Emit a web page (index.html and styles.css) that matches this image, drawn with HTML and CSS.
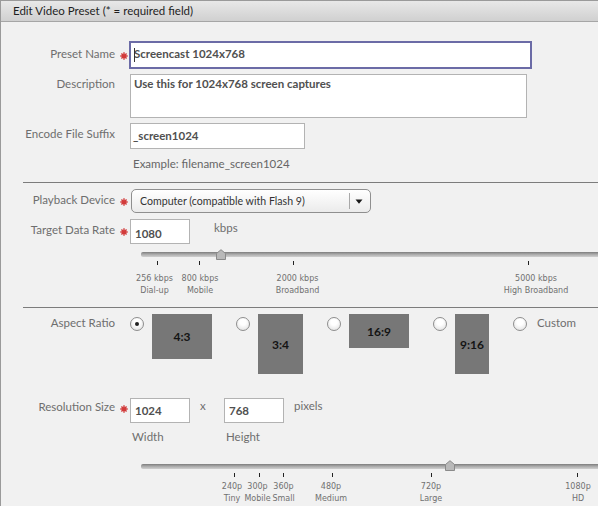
FILE: index.html
```html
<!DOCTYPE html>
<html>
<head>
<meta charset="utf-8">
<link rel="stylesheet" href="styles.css">
</head>
<body>
<div class="panel">
  <div class="titlebar">Edit Video Preset (* = required field)</div>
  <div class="content">
    <div class="row row-name">
      <div class="lbl">Preset Name</div>
      <div class="req"><svg class="star" width="8" height="8" viewBox="0 0 8 8"><path d="M4 0.3V7.7M0.3 4H7.7M1.4 1.4L6.6 6.6M6.6 1.4L1.4 6.6"/></svg></div>
      <div class="field field-name"><span class="caret"></span>Screencast 1024x768</div>
    </div>
    <div class="row row-desc">
      <div class="lbl">Description</div>
      <div class="req"></div>
      <div class="field field-desc">Use this for 1024x768 screen captures</div>
    </div>
    <div class="row row-suffix">
      <div class="lbl">Encode File Suffix</div>
      <div class="req"></div>
      <div class="field field-suffix">_screen1024</div>
    </div>
    <div class="hint">Example: filename_screen1024</div>
    <div class="divider"></div>

    <div class="row row-device">
      <div class="lbl">Playback Device</div>
      <div class="req"><svg class="star" width="8" height="8" viewBox="0 0 8 8"><path d="M4 0.3V7.7M0.3 4H7.7M1.4 1.4L6.6 6.6M6.6 1.4L1.4 6.6"/></svg></div>
      <div class="select">
        <span class="select-text">Computer (compatible with Flash 9)</span>
        <span class="select-btn"><svg width="8" height="5" viewBox="0 0 8 5"><path d="M0.5 0.5H7.5L4 4.8Z" fill="#1a1a1a"/></svg></span>
      </div>
    </div>
    <div class="row row-rate">
      <div class="lbl">Target Data Rate</div>
      <div class="req"><svg class="star" width="8" height="8" viewBox="0 0 8 8"><path d="M4 0.3V7.7M0.3 4H7.7M1.4 1.4L6.6 6.6M6.6 1.4L1.4 6.6"/></svg></div>
      <div class="field field-num field-rate">1080</div>
      <div class="unit unit-kbps">kbps</div>
    </div>
    <div class="slider slider-rate">
      <div class="track"></div>
      <svg class="thumb" style="left:75px" width="10" height="11" viewBox="0 0 10 11"><path d="M0.5 10.5V4.5L5 0.7L9.5 4.5V10.5Z" fill="#b9b9b9" stroke="#8a8a8a"/></svg>
      <div class="tick" style="left:16px"></div>
      <div class="tick" style="left:58px"></div>
      <div class="tick" style="left:152px"></div>
      <div class="tick" style="left:387px"></div>
      <div class="tick-label" style="left:13.5px">256 kbps<br>Dial-up</div>
      <div class="tick-label" style="left:59px">800 kbps<br>Mobile</div>
      <div class="tick-label" style="left:156.5px">2000 kbps<br>Broadband</div>
      <div class="tick-label" style="left:395px">5000 kbps<br>High Broadband</div>
    </div>
    <div class="divider divider-2"></div>

    <div class="row row-aspect">
      <div class="lbl">Aspect Ratio</div>
      <div class="req"></div>
      <div class="aspects">
        <span class="radio checked"></span>
        <div class="ratio r43">4:3</div>
        <span class="radio"></span>
        <div class="ratio r34">3:4</div>
        <span class="radio"></span>
        <div class="ratio r169">16:9</div>
        <span class="radio"></span>
        <div class="ratio r916">9:16</div>
        <span class="radio radio-last"></span>
        <span class="custom">Custom</span>
      </div>
    </div>

    <div class="row row-res">
      <div class="lbl">Resolution Size</div>
      <div class="req"><svg class="star" width="8" height="8" viewBox="0 0 8 8"><path d="M4 0.3V7.7M0.3 4H7.7M1.4 1.4L6.6 6.6M6.6 1.4L1.4 6.6"/></svg></div>
      <div class="field field-num field-res">1024</div>
      <div class="unit unit-x">x</div>
      <div class="field field-num field-res">768</div>
      <div class="unit unit-px">pixels</div>
    </div>
    <div class="dim-labels">
      <span class="dim dim-w">Width</span>
      <span class="dim">Height</span>
    </div>
    <div class="slider slider-res">
      <div class="track"></div>
      <svg class="thumb" style="left:304px" width="10" height="11" viewBox="0 0 10 11"><path d="M0.5 10.5V4.5L5 0.7L9.5 4.5V10.5Z" fill="#b9b9b9" stroke="#8a8a8a"/></svg>
      <div class="tick" style="left:93px"></div>
      <div class="tick" style="left:118px"></div>
      <div class="tick" style="left:142px"></div>
      <div class="tick" style="left:191px"></div>
      <div class="tick" style="left:290px"></div>
      <div class="tick" style="left:436px"></div>
      <div class="tick-label" style="left:91px">240p<br>Tiny</div>
      <div class="tick-label" style="left:116.5px">300p<br>Mobile</div>
      <div class="tick-label" style="left:142.5px">360p<br>Small</div>
      <div class="tick-label" style="left:190px">480p<br>Medium</div>
      <div class="tick-label" style="left:290px">720p<br>Large</div>
      <div class="tick-label" style="left:437px">1080p<br>HD</div>
    </div>
  </div>
</div>
</body>
</html>
```

FILE: styles.css
```css
* { box-sizing: border-box; }
html, body { margin: 0; padding: 0; }
body {
  width: 598px;
  height: 506px;
  overflow: hidden;
  background: #f1f1f1;
  font-family: Lato, "Open Sans", "Liberation Sans", sans-serif;
  font-size: 11.5px;
  color: #6e6e6e;
}
.panel {
  border-top: 1px solid #9a9a9a;
  border-left: 1px solid #9a9a9a;
  height: 506px;
  background: #f1f1f1;
}
.titlebar {
  height: 21px;
  border-bottom: 1px solid #a6a6a6;
  background: linear-gradient(#e8e8e8, #d0d0d0);
  padding-left: 12px;
  font-size: 11.5px;
  line-height: 20px;
  color: #1e1e1e;
}
.content { position: relative; }

.row { display: flex; align-items: flex-start; }
.lbl {
  flex: none;
  width: 114px;
  text-align: right;
  line-height: 14px;
  padding-top: 4px;
  white-space: nowrap;
}
.req { flex: none; width: 15px; height: 10px; }
.star { display: block; margin-left: 5px; margin-top: 9px; }
.star path { stroke: #d23a3a; stroke-width: 1.4; fill: none; }

.field {
  position: relative;
  flex: none;
  background: #fff;
  border: 1px solid #b3b3b3;
  font-weight: 700;
  color: #505050;
  line-height: 14px;
  padding-left: 3px;
  white-space: nowrap;
}

.row-name { margin-top: 19px; }
.row-name .lbl { padding-top: 6px; }
.row-name .star { margin-top: 11px; }
.field-name {
  margin-left: -1px;
  width: 403px;
  height: 28px;
  border: 2px solid #6b6ba6;
  padding-top: 4px;
  padding-left: 3px;
}
.caret {
  position: absolute;
  left: 3px;
  top: 5px;
  width: 1px;
  height: 14px;
  background: #333;
}

.row-desc { margin-top: 5px; }
.row-desc .lbl { padding-top: 3px; }
.field-desc { width: 397px; height: 44px; padding-top: 2px; }

.row-suffix { margin-top: 5px; }
.field-suffix { width: 175px; height: 26px; padding-top: 5px; padding-left: 2px; }

.hint {
  margin: 8px 0 0 132px;
  line-height: 14px;
  color: #666;
}
.divider {
  height: 1px;
  background: #7c7c7c;
  margin: 11px 0 0 22px;
}
.divider-2 { margin-top: 0; }

.row-device { margin-top: 6px; }
.select {
  margin-left: 1px;
  width: 240px;
  height: 24px;
  border: 1px solid #8f8f8f;
  border-radius: 5px;
  background: linear-gradient(#ffffff, #ebebeb);
  display: flex;
  align-items: stretch;
}
.select-text {
  flex: 1;
  padding: 4px 0 0 8px;
  font-size: 10.6px;
  line-height: 14px;
  color: #333;
  white-space: nowrap;
}
.select-btn {
  flex: none;
  width: 21px;
  margin: 3px 0;
  border-left: 1px solid #a8a8a8;
  display: flex;
  align-items: center;
  justify-content: center;
}
.select-btn svg { display: block; margin-left: -2px; }

.row-rate { margin-top: 6px; }
.field-num { width: 60px; height: 25px; padding-left: 4px; }
.field-rate { padding-top: 7px; }
.unit { line-height: 14px; white-space: nowrap; }
.unit-kbps { margin-left: 24px; padding-top: 2px; }

.slider {
  position: relative;
  margin-left: 140px;
  height: 63px;
}
.slider-res { height: 62px; }
.track {
  position: absolute;
  left: 0;
  right: 0;
  top: 8px;
  height: 5px;
  border-radius: 2px 0 0 2px;
  background: linear-gradient(#7d7d7d, #a9a9a9 45%, #d0d0d0);
}
.thumb { position: absolute; top: 5px; display: block; }
.tick {
  position: absolute;
  top: 17px;
  width: 1px;
  height: 4px;
  background: #222;
}
.tick-label {
  position: absolute;
  top: 29px;
  transform: translateX(-50%);
  font-family: "DejaVu Sans", Verdana, sans-serif;
  font-size: 8px;
  line-height: 12px;
  color: #707070;
  text-align: center;
  white-space: nowrap;
}

.row-aspect { margin-top: 6px; }
.row-aspect .lbl { padding-top: 2px; }
.aspects { display: flex; align-items: flex-start; }
.radio {
  flex: none;
  position: relative;
  width: 14px;
  height: 14px;
  margin-top: 3px;
  border-radius: 50%;
  border: 1px solid #8e8e8e;
  background: radial-gradient(circle at 50% 35%, #ffffff 30%, #dcdcdc 100%);
  margin-right: 8px;
}
.radio.checked::after {
  content: "";
  position: absolute;
  left: 4px;
  top: 4px;
  width: 4px;
  height: 4px;
  border-radius: 50%;
  background: #222;
}
.radio-last { margin-right: 10px; }
.ratio {
  flex: none;
  background: #777;
  color: #141414;
  font-weight: 700;
  font-size: 12px;
  display: flex;
  align-items: center;
  justify-content: center;
  margin-right: 24px;
}
.r43 { width: 60px; height: 45px; }
.r34 { width: 45px; height: 60px; }
.r169 { width: 60px; height: 34px; }
.r916 { width: 34px; height: 60px; }
.custom { line-height: 14px; padding-top: 2px; }

.row-res { margin-top: 24px; }
.row-res .lbl { padding-top: 2px; }
.row-res .star { margin-top: 7px; }
.field-res { padding-top: 5px; }
.unit-x { width: 34px; padding-left: 10px; padding-top: 1px; }
.unit-px { margin-left: 10px; padding-top: 1px; }

.dim-labels { display: flex; margin: 7px 0 0 131px; line-height: 14px; }
.dim-w { width: 94px; }

.slider-res .track { top: 20px; }
.slider-res .thumb { top: 16px; }
.slider-res .tick { top: 29px; }
.slider-res .tick-label { top: 37px; }
```
